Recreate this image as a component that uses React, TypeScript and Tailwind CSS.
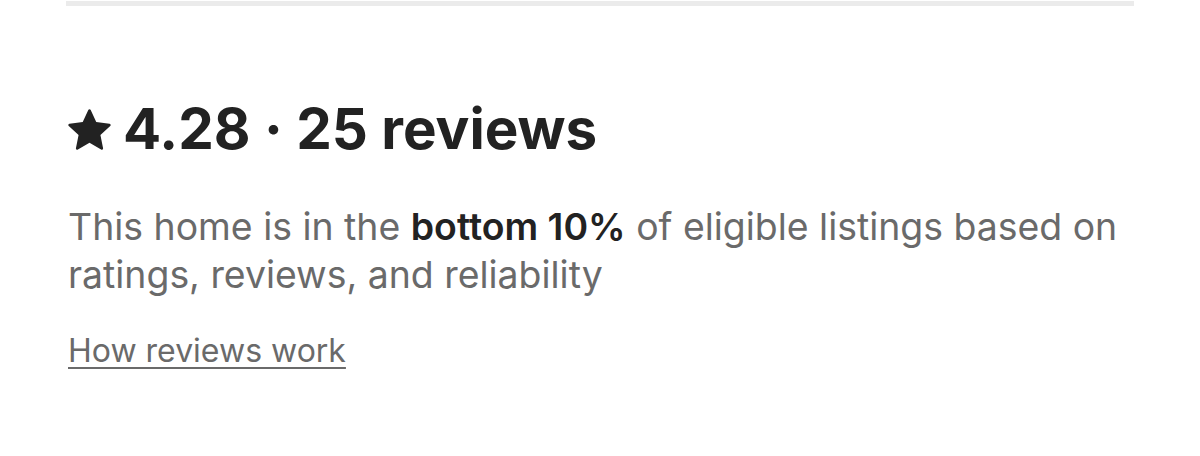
export default function App() {
  return (
    <div className="w-[1200px] h-[456px] bg-white font-['Inter',_'Liberation_Sans',_sans-serif] overflow-hidden">
      <div className="mx-[66px] mt-px h-[5px] bg-[#ebebeb]" />

      <section className="px-[68px] pt-[91px]">
        {/* Rating summary */}
        <h2 className="flex items-center gap-[12px] text-[56.5px] leading-[64px] font-bold text-[#222222]">
          <svg viewBox="0 0 32 32" className="w-[43px] h-[43px] fill-[#222222] shrink-0" aria-hidden="true">
            <path d="M15.1 1.58l-4.13 8.88-9.86 1.27a1 1 0 0 0-.54 1.74l7.3 6.57-1.97 9.85a1 1 0 0 0 1.48 1.06L16 25.93l8.62 5.02a1 1 0 0 0 1.48-1.06l-1.97-9.85 7.3-6.57a1 1 0 0 0-.55-1.73l-9.86-1.28-4.12-8.88a1 1 0 0 0-1.8 0z" />
          </svg>
          <span>4.28 · 25 reviews</span>
        </h2>

        <p className="mt-[42px] text-[37.4px] leading-[48px] text-[#6a6a6a] max-w-[1064px]">
          This home is in the <span className="font-semibold text-[#222222]">bottom 10%</span> of eligible listings based on ratings, reviews, and reliability
        </p>

        <a
          href="#"
          className="inline-block mt-[32px] text-[32px] leading-[40px] text-[#6a6a6a] underline decoration-2 underline-offset-[5px]"
        >
          How reviews work
        </a>
      </section>
    </div>
  );
}
